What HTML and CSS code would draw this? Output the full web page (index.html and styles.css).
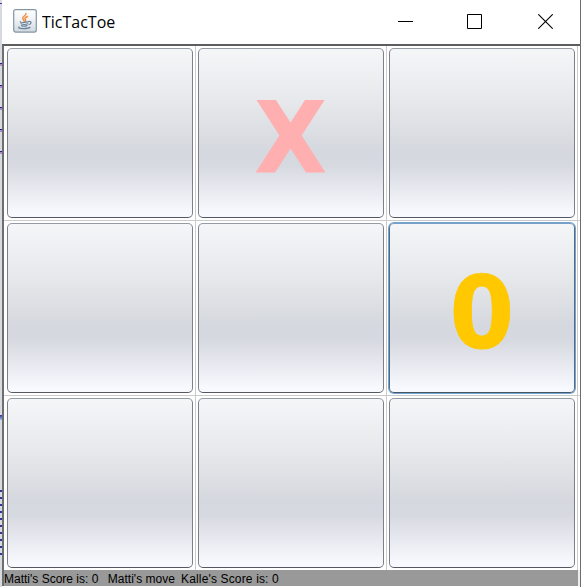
FILE: index.html
```
<!DOCTYPE html>
<html lang="en">
<head>
<meta charset="utf-8">
<title>TicTacToe</title>
<link rel="stylesheet" href="styles.css">
</head>
<body>
<div class="desktop">
<div class="backdrop"></div>
<div class="window">
<header class="titlebar">
<svg class="java" width="24" height="24" viewBox="0 0 24 24"><defs><linearGradient id="g" x2="0" y2="1"><stop stop-color="#fff"/><stop offset=".45" stop-color="#f0f2f4"/><stop offset="1" stop-color="#cfd8df"/></linearGradient></defs><rect x=".7" y=".7" width="22.6" height="22.4" rx="2" fill="url(#g)" stroke="#8296a6" stroke-width="1.2"/><g fill="none" stroke-linecap="round"><path d="M13 4.5c.5 2-4 3-3.3 5 .3 1 1.300 1 1.300 2.500M14.500 7.500c-3 1.400-3 2-2 3.200.500.700.300 1.300-.500 1.900" stroke="#f08a3c" stroke-width="1.400"/><path d="M7.500 12.700c-1.500.8 6.500.8 8 0M8 14.800c2 .8 5 .8 6.800 0M8.500 16.600c1.600.7 4 .7 5.500 0M16 12.500c3-.6 2.500 2.500 0 3M6 18c-2 2 9 2.200 11 .3" stroke="#668199" stroke-width="1.200"/></g></svg>
<h1 class="title">TicTacToe</h1>
<div class="controls">
<svg width="15" height="15"><path d="M0 7.500h15" stroke="#000"/></svg>
<svg width="15" height="15"><path d="M.5.5h14v14H.5z" fill="none" stroke="#000"/></svg>
<svg width="15" height="15"><path d="M.3.300l14.400 14.400M14.700.300L.300 14.700" stroke="#000" stroke-width="1.100"/></svg>
</div>
</header>
<main class="board">
<button class="cell"></button>
<button class="cell"><span class="mark x">X</span></button>
<button class="cell"></button>
<button class="cell"></button>
<button class="cell"></button>
<button class="cell focused"><span class="mark o">0</span></button>
<button class="cell"></button>
<button class="cell"></button>
<button class="cell"></button>
</main>
<footer class="status"><span>Matti's Score is: 0</span><span class="move">Matti's move</span><span class="kalle">Kalle's Score is: 0</span></footer>
</div>
</div>
</body>
</html>
```
FILE: styles.css
```
* { box-sizing: border-box; }
body { margin: 0; overflow: hidden; }
.desktop { display: flex; width: 581px; height: 587px; background: #ededed; }
.backdrop {
  width: 2px;
  background:
    linear-gradient(#4638a0, #4638a0) 0 3px / 2px 1px no-repeat,
    repeating-linear-gradient(transparent 0 19px, #2b1c91 19px 20px, #b18bd0 20px 22px) 0 44px / 2px 115px no-repeat,
    linear-gradient(#3a2aa0, #9bc6e8) 0 415px / 2px 5px no-repeat,
    repeating-linear-gradient(#35359c 0 2px, transparent 2px 7px) 0 490px / 2px 66px no-repeat,
    #d7dae0;
}
.window {
  display: flex;
  flex-direction: column;
  width: 579px;
  background: #fff;
  border-right: 1px solid #6b6d70;
}
.titlebar { display: flex; align-items: center; height: 44px; padding: 0 27px 0 11px; }
.java { margin-top: -3px; flex: none; }
.title {
  margin: 0 0 0 5px;
  font: 400 17px/24px "Open Sans", sans-serif;
  color: #000;
  transform: scaleX(.94);
  transform-origin: left;
}
.controls { display: flex; gap: 55px; margin-left: auto; }
.controls svg { display: block; margin-top: -1px; }
.controls svg:nth-child(2) { margin-left: -1px; margin-right: 1px; }
.board {
  display: grid;
  grid-template-columns: 191px 191px 192px;
  grid-template-rows: 175px 175px 174px;
  height: 526px;
  border-top: 2px solid #5b5d60;
  border-left: 2px solid #6b706d;
  background:
    linear-gradient(#c9cbcc, #c9cbcc) 191px 0 / 1px 100% no-repeat,
    linear-gradient(#c9cbcc, #c9cbcc) 382px 0 / 1px 100% no-repeat,
    linear-gradient(#c9cbcc, #c9cbcc) 573px 0 / 1px 100% no-repeat,
    linear-gradient(#c9cbcc, #c9cbcc) 0 174px / 100% 1px no-repeat,
    linear-gradient(#c9cbcc, #c9cbcc) 0 349px / 100% 1px no-repeat,
    #fff;
}
.cell {
  display: flex;
  align-items: center;
  justify-content: center;
  width: 186px;
  height: 170px;
  margin: 2px 0 0 3px;
  padding: 0;
  border: 1px solid;
  border-color: #959ba2 #7c8088 #555863 #7c8088;
  border-radius: 5px;
  background: linear-gradient(#f5f6f8 0%, #e6e8eb 32%, #d5d8de 60%, #d6d9df 69%, #f7f9ff 97%) border-box;
}
.focused { border-color: #78a0c4 #526c85 #465768 #526c85; box-shadow: 0 0 0 1px #73a4d1; }
.mark { display: block; font: 700 100px/116px "DejaVu Sans", sans-serif; }
.x { color: #ffafaf; -webkit-text-stroke: 1px #ffafaf; transform: translateY(6px) scale(.93, .985); }
.o { color: #ffc800; -webkit-text-stroke: .8px #ffc800; transform: translateY(6px) scaleX(.93); }
.status {
  height: 16px;
  border-left: 2px solid #6b706d;
  border-right: 2px solid #ededed;
  background: #999;
  color: #000;
  font: 12px/18px "Liberation Sans", sans-serif;
  white-space: pre;
}
.move { margin-left: 9.4px; letter-spacing: .03px; }
.kalle { margin-left: 6px; letter-spacing: .15px; }
```
